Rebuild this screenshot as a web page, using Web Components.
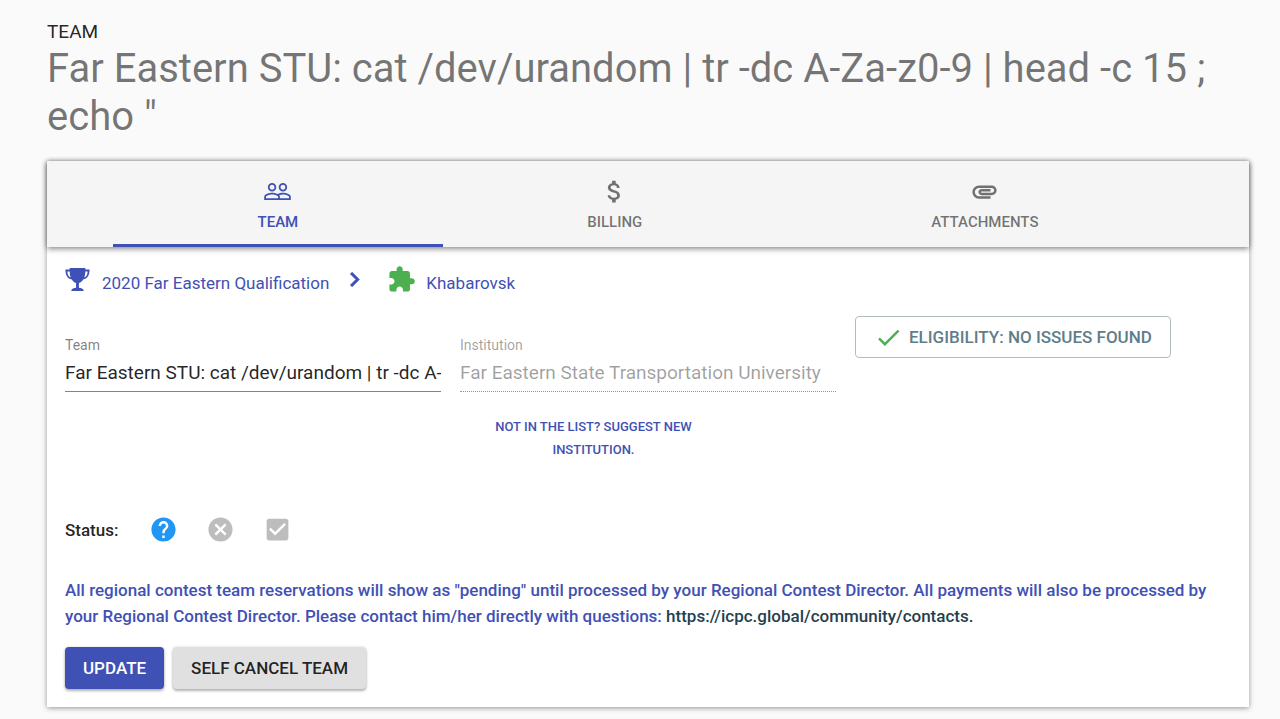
<!DOCTYPE html>
<html lang="en">
<head>
<meta charset="utf-8">
<meta name="viewport" content="width=device-width, initial-scale=1">
<title>Team</title>
<style>
  body { margin: 0; background: #fafafa; color: rgba(0,0,0,.87); font: 400 17px/26px Roboto, sans-serif; }
</style>
</head>
<body>
<team-page></team-page>
<script>
const ICONS = {
  people: '<path d="M16.5 13c-1.2 0-3.07.34-4.5 1-1.43-.67-3.3-1-4.5-1C5.33 13 1 14.08 1 16.25V19h22v-2.75c0-2.17-4.33-3.25-6.5-3.25zm-4 4.5h-10v-1.25c0-.54 2.56-1.75 5-1.75s5 1.21 5 1.75v1.25zm9 0H14v-1.25c0-.46-.2-.86-.52-1.22.88-.3 1.96-.53 3.02-.53 2.44 0 5 1.21 5 1.75v1.25zM7.5 12c1.93 0 3.5-1.57 3.5-3.5S9.43 5 7.5 5 4 6.57 4 8.5 5.57 12 7.5 12zm0-5.5c1.1 0 2 .9 2 2s-.9 2-2 2-2-.9-2-2 .9-2 2-2zm9 5.5c1.93 0 3.5-1.57 3.5-3.5S18.43 5 16.5 5 13 6.57 13 8.5s1.57 3.5 3.5 3.5zm0-5.5c1.1 0 2 .9 2 2s-.9 2-2 2-2-.9-2-2 .9-2 2-2z"/>',
  money: '<path d="M11.8 10.9c-2.27-.59-3-1.2-3-2.15 0-1.09 1.01-1.85 2.7-1.85 1.78 0 2.44.85 2.5 2.1h2.21c-.07-1.72-1.12-3.3-3.21-3.81V3h-3v2.16c-1.94.42-3.5 1.68-3.5 3.61 0 2.31 1.91 3.46 4.7 4.13 2.5.6 3 1.48 3 2.41 0 .69-.49 1.79-2.7 1.79-2.06 0-2.87-.92-2.98-2.1h-2.2c.12 2.19 1.76 3.42 3.68 3.83V21h3v-2.15c1.95-.37 3.5-1.5 3.5-3.55 0-2.84-2.43-3.81-4.7-4.4z"/>',
  clip: '<path d="M2 12.5C2 9.46 4.46 7 7.5 7H18c2.21 0 4 1.79 4 4s-1.79 4-4 4H9.5C8.12 15 7 13.88 7 12.5S8.12 10 9.5 10H17v2H9.41c-.55 0-.55 1 0 1H18c1.1 0 2-.9 2-2s-.9-2-2-2H7.5C5.57 9 4 10.57 4 12.5S5.57 16 7.5 16H17v2H7.5C4.46 18 2 15.54 2 12.5z"/>',
  trophy: '<path d="M5.5 2.5h13v1.300H22c0 4.700-1.700 7.700-5.300 8.300-.9 1.500-2 2.400-3.500 2.800v3.900c2 .1 3.400.8 3.900 2.100v.600H6.900v-.600c.5-1.300 1.900-2 3.900-2.100v-3.900c-1.500-.4-2.600-1.300-3.500-2.800C3.700 11.500 2 8.500 2 3.800h3.500zm0 2.800H3.600c.2 2.600 1.100 4.300 2.800 5-.6-1.500-.9-3.100-.9-5zm13 0c0 1.900-.3 3.500-.9 5 1.700-.7 2.600-2.400 2.800-5z"/>',
  chevron: '<path stroke="currentColor" stroke-width=".6" d="M10 6 8.59 7.41 13.17 12l-4.58 4.59L10 18l6-6z"/>',
  puzzle: '<path d="M20.5 11H19V7c0-1.1-.9-2-2-2h-4V3.5C13 2.12 11.88 1 10.5 1S8 2.12 8 3.5V5H4c-1.1 0-1.99.9-1.99 2v3.8H3.500c1.490 0 2.700 1.210 2.700 2.700s-1.210 2.700-2.700 2.700H2V20c0 1.100.900 2 2 2h3.800v-1.500c0-1.490 1.210-2.700 2.700-2.700s2.700 1.210 2.700 2.700V22H17c1.100 0 2-.900 2-2v-4h1.500c1.380 0 2.500-1.120 2.500-2.500S21.880 11 20.500 11z"/>',
  check: '<path d="M9 16.17 4.83 12l-1.42 1.41L9 19 21 7l-1.41-1.41z"/>',
  help: '<path d="M12 2C6.48 2 2 6.48 2 12s4.480 10 10 10 10-4.480 10-10S17.520 2 12 2zm1 17h-2v-2h2v2zm2.070-7.750-.900.920C13.450 12.900 13 13.500 13 15h-2v-.500c0-1.100.450-2.100 1.170-2.830l1.240-1.260c.370-.360.590-.860.590-1.410 0-1.100-.900-2-2-2s-2 .900-2 2H8c0-2.210 1.790-4 4-4s4 1.790 4 4c0 .880-.360 1.680-.930 2.250z"/>',
  cancel: '<path d="M12 2C6.470 2 2 6.470 2 12s4.470 10 10 10 10-4.470 10-10S17.530 2 12 2zm5 13.590L15.590 17 12 13.410 8.410 17 7 15.590 10.590 12 7 8.410 8.410 7 12 10.590 15.590 7 17 8.410 13.410 12 17 15.590z"/>',
  box: '<path d="M19 3H5c-1.110 0-2 .900-2 2v14c0 1.100.890 2 2 2h14c1.110 0 2-.900 2-2V5c0-1.100-.890-2-2-2zm-9 14-5-5 1.410-1.410L10 14.170l7.590-7.590L19 8l-9 9z"/>'
};

function define(name, render) {
  customElements.define(name, class extends HTMLElement {
    connectedCallback() {
      if (this.shadowRoot) return;
      this.attachShadow({ mode: 'open' }).innerHTML = render(this);
    }
  });
}

define('md-icon', el => `
  <style>
    :host { display: block; flex: none; width: 29px; height: 29px; }
    svg { display: block; width: 100%; height: 100%; fill: currentColor; }
  </style>
  <svg viewBox="0 0 24 24" aria-hidden="true">${ICONS[el.getAttribute('name')]}</svg>`);

define('page-heading', () => `
  <style>
    :host { display: block; padding-bottom: 19px; }
    p { margin: 0; font-size: 19px; line-height: 26px; }
    h1 { margin: 0; font-size: 40px; line-height: 48px; font-weight: 400; color: rgba(0,0,0,.54); }
  </style>
  <p><slot name="kind"></slot></p>
  <h1><slot></slot></h1>`);

define('tab-bar', () => `
  <style>
    :host { display: flex; padding: 0 66px; background: #f5f5f5; position: relative;
      box-shadow: 0 2px 6px rgba(0,0,0,.38), 0 0 5px rgba(0,0,0,.2); }
  </style>
  <slot></slot>`);

define('tab-item', el => `
  <style>
    :host { display: flex; flex: 1 1 auto; color: rgba(0,0,0,.54); }
    :host([active]) { color: #3f51b5; }
    button { flex: 1; display: flex; flex-direction: column; align-items: center; gap: 3px;
      padding: 16px 0 9px; border: 0; border-bottom: 3px solid transparent; background: none;
      font: 500 15px/26px Roboto, sans-serif; color: inherit; cursor: pointer; }
    :host([active]) button { border-bottom-color: currentColor; }
  </style>
  <button type="button" role="tab" aria-selected="${el.hasAttribute('active')}">
    <md-icon name="${el.getAttribute('icon')}"></md-icon><span><slot></slot></span>
  </button>`);

define('crumb-trail', () => `
  <style>
    :host { display: flex; align-items: center; margin-left: -2px; line-height: 22px; color: #3f51b5; }
    a { display: flex; align-items: flex-end; gap: 10px; color: inherit; text-decoration: none; }
    .next { margin: 0 18px 0 11px; }
    .site { color: #4caf50; }
  </style>
  <a href="#contest"><md-icon name="trophy"></md-icon><slot name="contest"></slot></a>
  <md-icon class="next" name="chevron"></md-icon>
  <a href="#site"><md-icon class="site" name="puzzle"></md-icon><slot name="site"></slot></a>`);

define('text-field', el => {
  const off = el.hasAttribute('disabled');
  return `
  <style>
    :host { display: block; min-width: 0; }
    label { display: block; font-size: 14px; line-height: 18px; color: rgba(0,0,0,.5); }
    input { display: block; box-sizing: border-box; width: 100%; height: 38px; margin: 0; padding: 0;
      border: 0; border-bottom: 1px solid rgba(0,0,0,.48); border-radius: 0; outline: 0; background: none;
      font: 400 19px/26px Roboto, sans-serif; color: rgba(0,0,0,.87); }
    input:disabled { color: rgba(0,0,0,.38); border-bottom: 1px dotted rgba(0,0,0,.42); }
    :host([disabled]) label { color: rgba(0,0,0,.38); }
  </style>
  <label for="f">${el.getAttribute('label')}</label>
  <input id="f" type="text" value="${el.getAttribute('value')}"${off ? ' disabled' : ''}>
  <slot></slot>`;
});

define('action-button', () => `
  <style>
    :host { display: inline-flex; }
    button { display: flex; align-items: center; justify-content: center; gap: 6px;
      min-height: 42px; padding: 0 18px; border: 0; border-radius: 4px; cursor: pointer;
      font: 500 17px/26px Roboto, sans-serif; color: rgba(0,0,0,.87); background: #e0e0e0;
      box-shadow: 0 2px 3px rgba(0,0,0,.28), 0 0 3px rgba(0,0,0,.14); }
    :host([kind=primary]) button { background: #3f51b5; color: #fff; }
    :host([kind=outline]) button { background: #fff; color: #607d8b; border: 1px solid #b5bcc0;
      box-shadow: none; }
    :host([kind=link]) { display: flex; width: 71%; }
    :host([kind=link]) button { flex: 1; background: none; color: #3f51b5;
      box-shadow: none; font-size: 13px; line-height: 23px; }
  </style>
  <button type="button"><slot name="icon"></slot><span><slot></slot></span></button>`);

define('status-picker', () => `
  <style>
    :host { display: flex; align-items: center; font-weight: 500; }
    span { margin-right: 31px; }
    div { display: flex; gap: 28px; }
    button { padding: 0; border: 0; background: none; color: #bdbdbd; cursor: pointer; }
    .on { color: #2196f3; }
  </style>
  <span><slot></slot></span>
  <div>
    <button class="on" type="button" aria-label="Pending"><md-icon name="help"></md-icon></button>
    <button type="button" aria-label="Cancelled"><md-icon name="cancel"></md-icon></button>
    <button type="button" aria-label="Accepted"><md-icon name="box"></md-icon></button>
  </div>`);

define('info-note', el => `
  <style>
    :host { display: block; color: #3f51b5; font-weight: 500; }
    p { margin: 0; }
    a { color: #263f4f; text-decoration: none; }
  </style>
  <p><slot></slot> <a href="${el.getAttribute('href')}">${el.getAttribute('href')}.</a></p>`);

define('team-page', () => `
  <style>
    :host { display: block; padding: 19px 31px 12px 47px; }
    main { margin-top: 1px; background: #fff; box-shadow: 0 1px 5px rgba(0,0,0,.42); }
    .body { padding: 18px; }
    .fields { display: grid; grid-template-columns: repeat(3, 1fr); gap: 19px; align-items: start;
      margin: 22px 0 54px; }
    text-field { padding-top: 20px; }
    text-field action-button { padding-top: 23px; }
    .fields > action-button { justify-self: start; }
    .check { color: #4caf50; }
    info-note { margin: 33px 0 18px; }
    .actions { display: flex; gap: 9px; }
  </style>
  <page-heading><span slot="kind">TEAM</span>Far Eastern STU: cat /dev/urandom | tr -dc A-Za-z0-9 | head -c 15 ; echo "</page-heading>
  <main>
    <tab-bar role="tablist">
      <tab-item icon="people" active>TEAM</tab-item>
      <tab-item icon="money">BILLING</tab-item>
      <tab-item icon="clip">ATTACHMENTS</tab-item>
    </tab-bar>
    <div class="body">
      <crumb-trail>
        <span slot="contest">2020 Far Eastern Qualification</span>
        <span slot="site">Khabarovsk</span>
      </crumb-trail>
      <div class="fields">
        <text-field label="Team" value="Far Eastern STU: cat /dev/urandom | tr -dc A-Za-z0-9 | head -c 15 ; echo &amp;quot;"></text-field>
        <text-field label="Institution" value="Far Eastern State Transportation University" disabled>
          <action-button kind="link">NOT IN THE LIST? SUGGEST NEW INSTITUTION.</action-button>
        </text-field>
        <action-button kind="outline"><md-icon slot="icon" class="check" name="check"></md-icon>ELIGIBILITY: NO ISSUES FOUND</action-button>
      </div>
      <status-picker>Status:</status-picker>
      <info-note href="https://icpc.global/community/contacts">All regional contest team reservations will show as "pending" until processed by your Regional Contest Director. All payments will also be processed by your Regional Contest Director. Please contact him/her directly with questions:</info-note>
      <div class="actions">
        <action-button kind="primary">UPDATE</action-button>
        <action-button>SELF CANCEL TEAM</action-button>
      </div>
    </div>
  </main>`);
</script>
</body>
</html>
